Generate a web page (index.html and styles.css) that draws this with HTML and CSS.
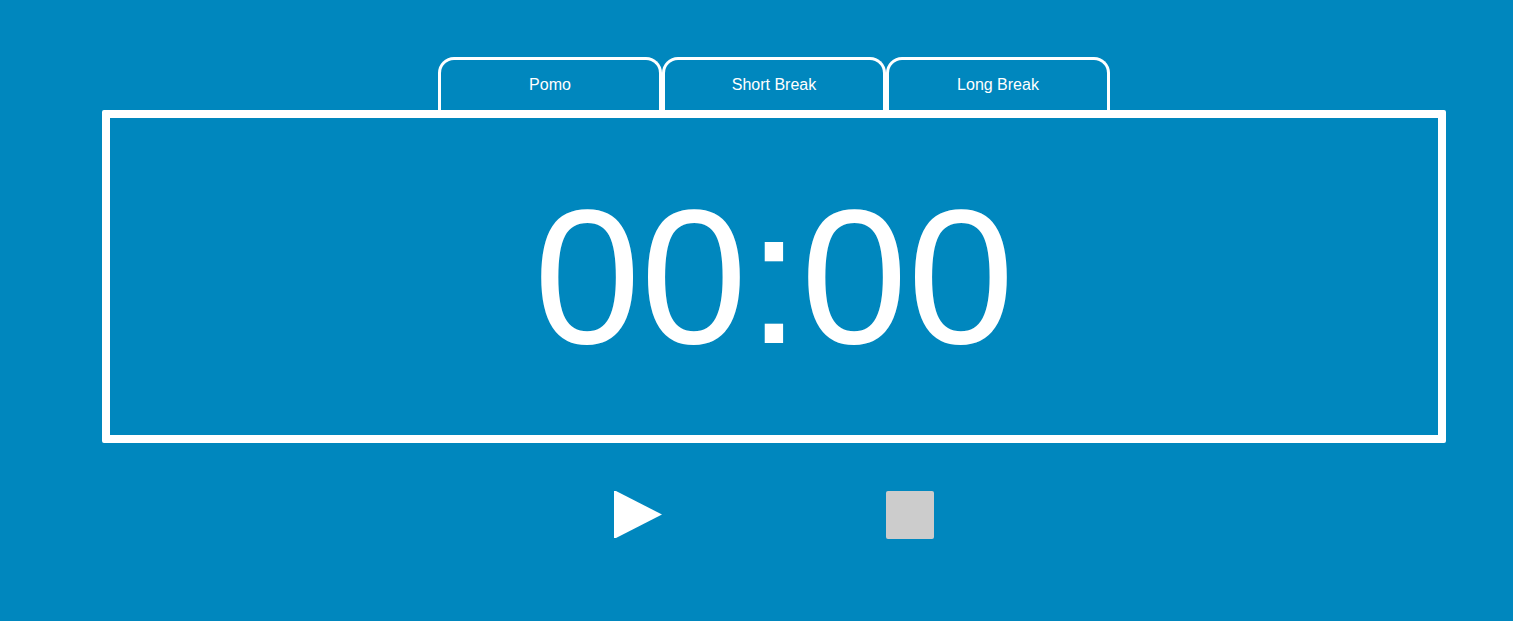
FILE: index.html
```
<!DOCTYPE html>
<html lang="en">
<head>
<meta charset="utf-8">
<title>Pomodoro Timer</title>
<link rel="stylesheet" href="styles.css">
</head>
<body>
<main class="timer">
  <nav class="tabs" aria-label="Timer mode">
    <button class="tab" type="button">Pomo</button>
    <button class="tab" type="button">Short Break</button>
    <button class="tab" type="button">Long Break</button>
  </nav>
  <section class="display">
    <time class="clock">00:00</time>
  </section>
  <div class="controls">
    <button class="control play" type="button" aria-label="Start"><svg class="icon" viewBox="0 0 48 48" aria-hidden="true"><path d="M0 0H2L48 23.5 2 47H0Z"/></svg></button>
    <button class="control stop" type="button" aria-label="Stop"></button>
  </div>
</main>
</body>
</html>
```
FILE: styles.css
```
* { box-sizing: border-box; }
body {
  margin: 0;
  background: #0087be;
  color: #fff;
  font-family: "Liberation Sans", Arial, sans-serif;
}
.timer {
  margin: 57px 67px 0 102px;
}
.tabs {
  display: grid;
  grid-template-columns: repeat(3, 1fr);
  width: 50%;
  margin: 0 auto;
}
.tab {
  padding: 16px;
  border: 3px solid #fff;
  border-bottom: 0;
  border-radius: 16px 16px 0 0;
  background: none;
  color: inherit;
  font: 16px/18px "Liberation Sans", Arial, sans-serif;
  cursor: pointer;
}
.display {
  display: flex;
  justify-content: center;
  padding: 48px 0;
  border: 8px solid #fff;
  border-radius: 2px;
}
.clock {
  font-size: 192px;
  line-height: 221px;
}
.controls {
  display: flex;
  justify-content: center;
  gap: 224px;
  margin-top: 48px;
}
.control {
  width: 48px;
  height: 48px;
  padding: 0;
  border: 0;
  background: none;
  cursor: pointer;
}
.icon {
  display: block;
  width: 100%;
  height: 100%;
  fill: #fff;
}
.stop {
  border-radius: 2px;
  background: #ccc;
}
```
